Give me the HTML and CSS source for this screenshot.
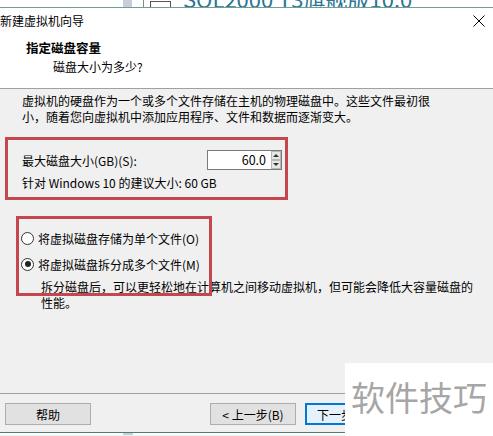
FILE: index.html
```html
<!DOCTYPE html>
<html lang="zh-CN">
<head>
    <meta charset="UTF-8">
    <meta name="viewport" content="width=device-width, initial-scale=1.0">
    <title>新建虚拟机向导</title>
    <link rel="stylesheet" href="styles.css">
</head>
<body>
    <div class="backdrop">
        <span class="bd-square"></span>
        <span class="bd-line"></span>
        <span class="bd-box"></span>
        <span class="bd-text">SQL2000 T3旗舰版10.0</span>
    </div>

    <div class="titlebar">
        <span class="title">新建虚拟机向导</span>
        <svg class="close" width="12" height="12" viewBox="0 0 12 12">
            <path d="M0.5 0.5 L11.5 11.5 M11.5 0.5 L0.5 11.5" stroke="#000" stroke-width="1" fill="none"/>
        </svg>
    </div>

    <div class="header">
        <div class="header-title">指定磁盘容量</div>
        <div class="header-sub">磁盘大小为多少?</div>
    </div>

    <div class="content">
        <p class="intro">虚拟机的硬盘作为一个或多个文件存储在主机的物理磁盘中。这些文件最初很小，随着您向虚拟机中添加应用程序、文件和数据而逐渐变大。</p>

        <div class="size-box">
            <div class="size-row">
                <label for="size">最大磁盘大小(GB)(S):</label>
                <div class="spin-box">
                    <span class="spin-value" id="size">60.0</span>
                    <span class="spinner">
                        <span class="spin-btn"><span class="arrow-up"></span></span>
                        <span class="spin-btn"><span class="arrow-down"></span></span>
                    </span>
                </div>
            </div>
            <div class="hint">针对 Windows 10 的建议大小: 60 GB</div>
        </div>

        <div class="options">
            <div class="radio-row">
                <span class="radio"></span>
                <span>将虚拟磁盘存储为单个文件(O)</span>
            </div>
            <div class="radio-row">
                <span class="radio checked"></span>
                <span>将虚拟磁盘拆分成多个文件(M)</span>
            </div>
            <p class="option-desc">拆分磁盘后，可以更轻松地在计算机之间移动虚拟机，但可能会降低大容量磁盘的性能。</p>
        </div>
    </div>

    <div class="footer">
        <button class="btn btn-help">帮助</button>
        <button class="btn btn-back">&lt; 上一步(B)</button>
        <button class="btn btn-next">下一步(N) &gt;</button>
    </div>
    <div class="below"><span class="below-square"></span></div>

    <div class="mark-box"></div>
    <div class="watermark">软件技巧</div>
</body>
</html>
```

FILE: styles.css
```css
body {
    margin: 0;
    width: 493px;
    height: 436px;
    overflow: hidden;
    position: relative;
    background: #f0f0f0;
    font-family: "Noto Sans CJK SC", "Noto Sans", sans-serif;
    font-size: 12px;
    color: #000;
}

/* window behind the dialog */
.backdrop {
    height: 7px;
    background: #fff;
    border-bottom: 1px solid #6f9f93;
    display: flex;
    align-items: flex-end;
    overflow: hidden;
}

.bd-square {
    margin-left: 123px;
    width: 9px;
    height: 7px;
    background: #c9ccd9;
    flex: none;
}

.bd-line {
    margin-left: 11px;
    width: 1px;
    height: 7px;
    background: #8a8a8a;
    flex: none;
}

.bd-box {
    margin-left: 6px;
    width: 19px;
    height: 5px;
    border: 1px solid #555;
    border-bottom: none;
    flex: none;
}

.bd-text {
    margin-left: 12px;
    margin-bottom: -2px;
    font-size: 22px;
    line-height: 22px;
    color: #2b7494;
    white-space: nowrap;
    flex: none;
}

/* dialog */
.titlebar {
    height: 27px;
    background: #fff;
    display: flex;
    align-items: center;
    justify-content: space-between;
    padding-right: 8px;
}

.title {
    line-height: 16px;
    margin-top: -1px;
}

.close {
    display: block;
    margin-top: -2px;
}

.header {
    height: 47px;
    background: #fff;
    border-bottom: 1px solid #a0a0a0;
    padding: 6px 0 0 26px;
}

.header-title {
    font-weight: bold;
    font-size: 12.5px;
    line-height: 14px;
}

.header-sub {
    margin-top: 5px;
    padding-left: 27px;
    line-height: 14px;
}

.content {
    height: 304px;
    padding-left: 5px;
    box-sizing: border-box;
    padding-top: 4px;
}

.intro {
    margin: 0;
    padding-left: 17px;
    width: 414px;
    line-height: 16px;
}

.size-box {
    margin-top: 12px;
    width: 283px;
    box-sizing: border-box;
    border: 3px solid #c4474d;
    padding: 0 3px 6px 14px;
}

.size-row {
    margin-top: 10px;
    display: flex;
    align-items: center;
    justify-content: space-between;
}

.spin-box {
    width: 75px;
    height: 20px;
    box-sizing: border-box;
    border: 1px solid #7a7a7a;
    background: #fff;
    display: flex;
}

.spin-value {
    flex: 1;
    text-align: right;
    padding-right: 5px;
    line-height: 18px;
    font-size: 12.5px;
}

.spinner {
    width: 10px;
    display: flex;
    flex-direction: column;
}

.spin-btn {
    flex: 1;
    background: #e6e6e6;
    border: 1px solid #b8b8b8;
    display: flex;
    align-items: center;
    justify-content: center;
}

.arrow-up {
    border-left: 3px solid transparent;
    border-right: 3px solid transparent;
    border-bottom: 3px solid #333;
}

.arrow-down {
    border-left: 3px solid transparent;
    border-right: 3px solid transparent;
    border-top: 3px solid #333;
}

.hint {
    margin-top: 5px;
    line-height: 16px;
}

.options {
    margin-top: 30px;
}

.radio-row {
    display: flex;
    align-items: center;
    height: 16px;
    margin-bottom: 10px;
    padding-left: 16px;
}

.radio {
    width: 11px;
    height: 11px;
    border: 1px solid #333;
    border-radius: 50%;
    background: #fff;
    margin-right: 4px;
    display: flex;
    align-items: center;
    justify-content: center;
}

.radio.checked::after {
    content: "";
    width: 6px;
    height: 6px;
    border-radius: 50%;
    background: #222;
}

.option-desc {
    margin: -3px 0 0 36px;
    width: 438px;
    line-height: 16px;
}

.footer {
    height: 39px;
    border-top: 1px solid #a0a0a0;
    display: flex;
    align-items: flex-start;
    padding-top: 9px;
    box-sizing: border-box;
}

.btn {
    width: 86px;
    height: 22px;
    border: 1px solid #adadad;
    background: #e1e1e1;
    font-family: inherit;
    font-size: 12px;
    padding: 0;
    color: #000;
}

.btn-help {
    margin-left: 5px;
}

.btn-back {
    margin-left: 119px;
}

.btn-next {
    margin-left: 9px;
    border: 2px solid #0078d7;
    background: #e5f1fb;
}

.below {
    height: 2px;
    border-top: 1px solid #4f7f6f;
    background: #fff;
}

.below-square {
    display: block;
    margin-left: 123px;
    width: 10px;
    height: 2px;
    background: #c9ccd9;
}

/* annotation and watermark on top of the screenshot */
.mark-box {
    position: absolute;
    left: 16px;
    top: 216px;
    width: 196px;
    height: 80px;
    box-sizing: border-box;
    border: 3px solid #c4474d;
}

.watermark {
    position: absolute;
    right: 0;
    bottom: 0;
    width: 148px;
    height: 73px;
    background: #fff;
    color: #a6a6a6;
    font-size: 34px;
    display: flex;
    align-items: center;
    justify-content: center;
    padding-bottom: 6px;
    box-sizing: border-box;
}
```
